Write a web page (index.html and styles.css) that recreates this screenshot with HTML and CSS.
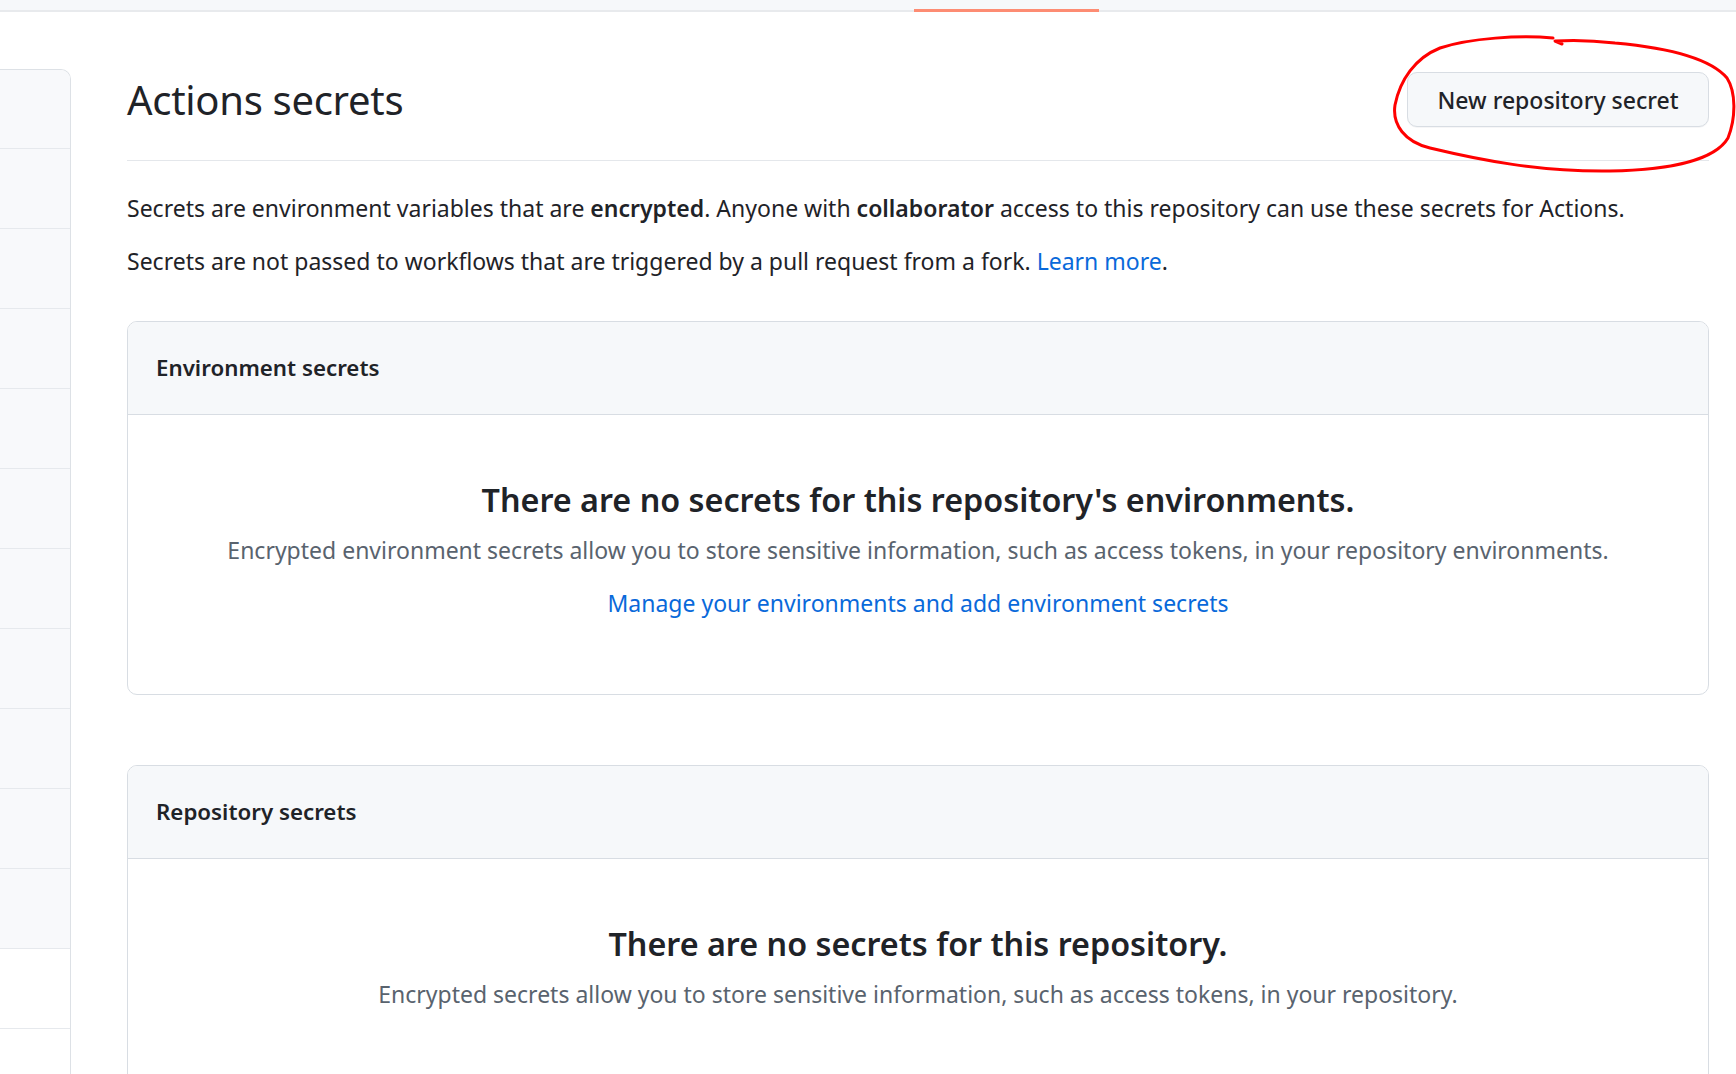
FILE: index.html
```html
<!DOCTYPE html>
<html lang="en">
<head>
<meta charset="utf-8">
<title>Actions secrets</title>
<link rel="stylesheet" href="styles.css">
</head>
<body>
<div class="topbar"><span class="tab-active"></span></div>
<div class="layout">
  <nav class="sidebar">
    <div class="side-row"></div>
    <div class="side-row"></div>
    <div class="side-row"></div>
    <div class="side-row"></div>
    <div class="side-row"></div>
    <div class="side-row"></div>
    <div class="side-row"></div>
    <div class="side-row"></div>
    <div class="side-row"></div>
    <div class="side-row"></div>
    <div class="side-row"></div>
    <div class="side-row side-row-plain"></div>
    <div class="side-row side-row-plain"></div>
  </nav>
  <main class="main">
    <div class="subhead">
      <h2 class="subhead-title">Actions secrets</h2>
      <button class="btn">New repository secret</button>
    </div>
    <div class="intro">
      <p>Secrets are environment variables that are <strong>encrypted</strong>. Anyone with <strong>collaborator</strong> access to this repository can use these secrets for Actions.</p>
      <p>Secrets are not passed to workflows that are triggered by a pull request from a fork. <a href="#">Learn more</a>.</p>
    </div>
    <section class="box">
      <div class="box-header">Environment secrets</div>
      <div class="blankslate">
        <h3>There are no secrets for this repository's environments.</h3>
        <p>Encrypted environment secrets allow you to store sensitive information, such as access tokens, in your repository environments.</p>
        <a class="blank-link" href="#">Manage your environments and add environment secrets</a>
      </div>
    </section>
    <section class="box box-second">
      <div class="box-header">Repository secrets</div>
      <div class="blankslate">
        <h3>There are no secrets for this repository.</h3>
        <p>Encrypted secrets allow you to store sensitive information, such as access tokens, in your repository.</p>
      </div>
    </section>
  </main>
</div>
<svg class="annotation" width="1736" height="200" viewBox="0 0 1736 200" aria-hidden="true">
  <path d="M1553,38 C1520,35 1470,38 1440,48 C1415,58 1400,80 1395,105 C1392,125 1405,142 1430,148 C1480,160 1540,172 1610,171 C1670,170 1715,160 1728,138 C1736,118 1736,92 1727,78 C1710,58 1670,48 1615,43 C1590,40 1570,40 1555,41 L1562,44" fill="none" stroke="#ff0000" stroke-width="3" stroke-linecap="round" stroke-linejoin="round"/>
</svg>
</body>
</html>
```

FILE: styles.css
```css
* { box-sizing: border-box; }

html, body {
  margin: 0;
  padding: 0;
  background: #ffffff;
  overflow: hidden;
}

body {
  font-family: "Noto Sans", "Open Sans", "DejaVu Sans", sans-serif;
  color: #1f2328;
  width: 1736px;
  height: 1074px;
  position: relative;
}

.topbar {
  height: 12px;
  background: #f6f8fa;
  border-bottom: 2px solid #e8eaed;
  display: flex;
  align-items: flex-end;
}

.tab-active {
  display: block;
  margin-left: 914px;
  width: 185px;
  height: 3px;
  margin-bottom: -2px;
  background: #fd8c73;
}

.layout {
  display: flex;
  margin-top: 57px;
}

.sidebar {
  width: 71px;
  flex: none;
  border: 1px solid #dde1e6;
  border-left: none;
  border-top-right-radius: 10px;
  overflow: hidden;
  height: 1010px;
}

.side-row {
  height: 80px;
  background: #f8f9fb;
  border-bottom: 1px solid #e6e9ed;
}

.side-row:first-child { height: 79px; }

.side-row-plain { background: #ffffff; }

.main {
  flex: 1;
  margin-left: 56px;
  padding-right: 27px;
  min-width: 0;
}

.subhead {
  display: flex;
  align-items: center;
  justify-content: space-between;
  padding-top: 3px;
  padding-bottom: 33px;
  border-bottom: 1px solid #e4e7eb;
  margin-bottom: 29px;
}

.subhead-title {
  margin: 0;
  font-size: 40px;
  font-weight: 400;
  line-height: 55px;
  letter-spacing: -0.3px;
}

.btn {
  width: 302px;
  height: 55px;
  padding: 0;
  font-family: inherit;
  font-size: 23px;
  font-weight: 500;
  color: #1f2328;
  background: #f6f8fa;
  border: 1px solid #d8dde3;
  border-radius: 10px;
  box-shadow: 0 1px 0 rgba(31, 35, 40, 0.04);
}

.intro {
  margin-bottom: 42px;
}

.intro p {
  margin: 0 0 17px;
  font-size: 23px;
  line-height: 36px;
}

.intro p:last-child { margin-bottom: 0; }

.intro strong { font-weight: 600; }

a {
  color: #0969da;
  text-decoration: none;
}

.box {
  border: 1px solid #d8dde3;
  border-radius: 10px;
  overflow: hidden;
}

.box-second {
  margin-top: 70px;
}

.box-header {
  height: 94px;
  display: flex;
  align-items: center;
  padding: 0 28px;
  background: #f6f8fa;
  border-bottom: 1px solid #d8dde3;
  font-size: 22.3px;
  font-weight: 600;
  margin-top: -1px;
}

.blankslate {
  text-align: center;
  padding: 60px 28px 73px;
}

.blankslate h3 {
  margin: 0 0 9px;
  font-size: 32.3px;
  font-weight: 600;
  line-height: 48px;
}

.blankslate p {
  margin: 0 0 17px;
  font-size: 23px;
  line-height: 36px;
  color: #59636e;
}

.blank-link {
  display: inline-block;
  font-size: 23px;
  line-height: 36px;
}

.annotation {
  position: absolute;
  left: 0;
  top: 0;
  pointer-events: none;
}
```
